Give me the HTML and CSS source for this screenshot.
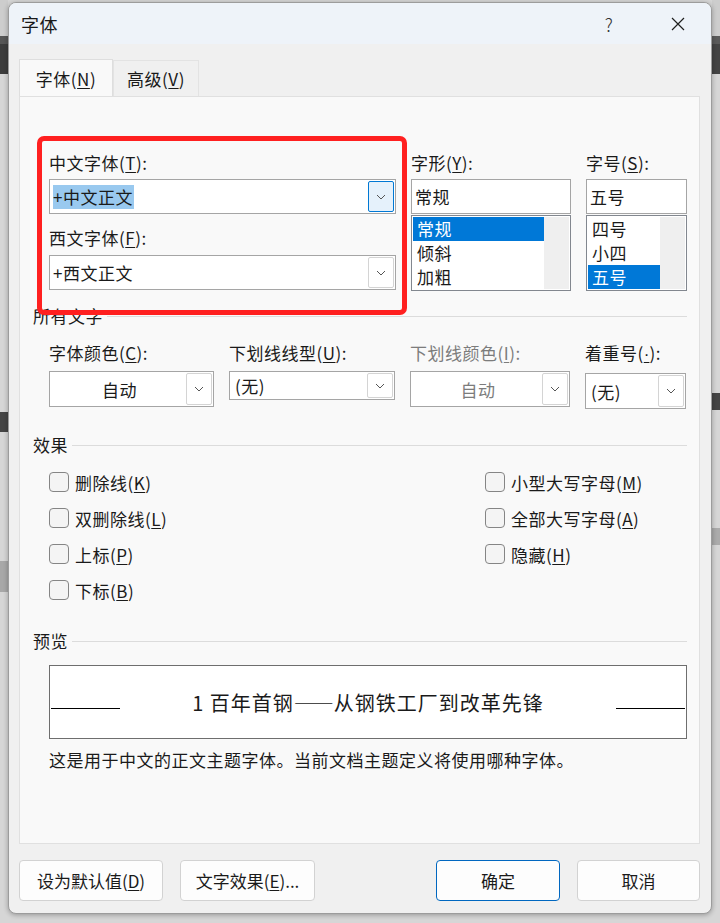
FILE: index.html
```html
<!DOCTYPE html>
<html lang="zh-CN">
<head>
  <meta charset="UTF-8">
  <title>字体</title>
  <link rel="stylesheet" href="styles.css">
</head>
<body>
  <div class="dialog">
    <div class="titlebar">
      <span class="title">字体</span>
      <span class="help">?</span>
      <span class="close">
        <svg width="14" height="14" viewBox="0 0 14 14"><path d="M1 1L13 13M13 1L1 13" stroke="#1f1f1f" stroke-width="1.2" fill="none"/></svg>
      </span>
    </div>

    <div class="tabs">
      <div class="tab active">字体(<u>N</u>)</div>
      <div class="tab">高级(<u>V</u>)</div>
    </div>

    <div class="panel">
      <div class="mark-box"></div>

      <div class="font-grid">
        <div class="col">
          <div class="lbl">中文字体(<u>T</u>):</div>
          <div class="combo big">
            <div class="value"><span class="picked">+中文正文</span></div>
            <div class="drop hot"><svg width="10" height="6" viewBox="0 0 10 6"><path d="M1 1L5 5L9 1" stroke="#555" fill="none"/></svg></div>
          </div>
          <div class="lbl second">西文字体(<u>F</u>):</div>
          <div class="combo big">
            <div class="value">+西文正文</div>
            <div class="drop"><svg width="10" height="6" viewBox="0 0 10 6"><path d="M1 1L5 5L9 1" stroke="#555" fill="none"/></svg></div>
          </div>
        </div>
        <div class="col">
          <div class="lbl">字形(<u>Y</u>):</div>
          <div class="textbox">常规</div>
          <div class="listbox">
            <ul>
              <li class="on">常规</li>
              <li>倾斜</li>
              <li>加粗</li>
            </ul>
            <div class="track"></div>
          </div>
        </div>
        <div class="col">
          <div class="lbl">字号(<u>S</u>):</div>
          <div class="textbox">五号</div>
          <div class="listbox">
            <ul class="sizes">
              <li>四号</li>
              <li>小四</li>
              <li class="on">五号</li>
            </ul>
            <div class="track"></div>
          </div>
        </div>
      </div>

      <div class="group first-group"><span>所有文字</span><i></i></div>

      <div class="color-grid">
        <div class="col">
          <div class="lbl">字体颜色(<u>C</u>):</div>
          <div class="combo">
            <div class="value center">自动</div>
            <div class="drop"><svg width="10" height="6" viewBox="0 0 10 6"><path d="M1 1L5 5L9 1" stroke="#555" fill="none"/></svg></div>
          </div>
        </div>
        <div class="col">
          <div class="lbl">下划线线型(<u>U</u>):</div>
          <div class="combo short">
            <div class="value pad">(无)</div>
            <div class="drop"><svg width="10" height="6" viewBox="0 0 10 6"><path d="M1 1L5 5L9 1" stroke="#555" fill="none"/></svg></div>
          </div>
        </div>
        <div class="col off">
          <div class="lbl">下划线颜色(<u>I</u>):</div>
          <div class="combo">
            <div class="value center">自动</div>
            <div class="drop"><svg width="10" height="6" viewBox="0 0 10 6"><path d="M1 1L5 5L9 1" stroke="#555" fill="none"/></svg></div>
          </div>
        </div>
        <div class="col">
          <div class="lbl">着重号(<u class="dot">·</u>):</div>
          <div class="combo">
            <div class="value pad">(无)</div>
            <div class="drop"><svg width="10" height="6" viewBox="0 0 10 6"><path d="M1 1L5 5L9 1" stroke="#555" fill="none"/></svg></div>
          </div>
        </div>
      </div>

      <div class="group effects-group"><span>效果</span><i></i></div>

      <div class="checks">
        <label class="check"><span class="box"></span>删除线(<u>K</u>)</label>
        <label class="check"><span class="box"></span>双删除线(<u>L</u>)</label>
        <label class="check"><span class="box"></span>上标(<u>P</u>)</label>
        <label class="check"><span class="box"></span>下标(<u>B</u>)</label>
        <label class="check"><span class="box"></span>小型大写字母(<u>M</u>)</label>
        <label class="check"><span class="box"></span>全部大写字母(<u>A</u>)</label>
        <label class="check"><span class="box"></span>隐藏(<u>H</u>)</label>
      </div>

      <div class="group preview-group"><span>预览</span><i></i></div>

      <div class="preview">
        <span class="rule"></span>
        <span class="sample">1 百年首钢<span class="dash">——</span>从钢铁工厂到改革先锋</span>
        <span class="rule"></span>
      </div>
      <div class="note">这是用于中文的正文主题字体。当前文档主题定义将使用哪种字体。</div>
    </div>

    <div class="footer">
      <button class="btn w-default">设为默认值(<u>D</u>)</button>
      <button class="btn w-effect">文字效果(<u>E</u>)...</button>
      <button class="btn ok">确定</button>
      <button class="btn cancel">取消</button>
    </div>
  </div>
</body>
</html>
```

FILE: styles.css
```css
body {
  margin: 0;
  height: 923px;
  overflow: hidden;
  font-family: "Noto Sans CJK SC", "Microsoft YaHei", sans-serif;
  font-size: 17px;
  letter-spacing: 0.5px;
  color: #1a1a1a;
  background:
    linear-gradient(to bottom, #cdcdcd 0 36px, #565656 36px 44px, #3c3c3c 44px 74px, #d6d6d6 74px 412px, #454545 412px 432px, #d6d6d6 432px 561px, #a8a8a8 561px 592px, #d6d6d6 592px) left top / 8px 100% no-repeat,
    linear-gradient(to bottom, #cdcdcd 0 36px, #5a5a5a 36px 44px, #444 44px 74px, #d6d6d6 74px 393px, #454545 393px 410px, #d6d6d6 410px 528px, #ababab 528px 545px, #d6d6d6 545px) right top / 8px 100% no-repeat,
    #d6d6d6;
}

u { text-decoration-thickness: 1px; text-underline-offset: 2px; }
u.dot { font-family: "Liberation Sans", sans-serif; letter-spacing: 0; }

.dialog {
  box-sizing: border-box;
  width: 704px;
  height: 912px;
  margin: 2px 0 0 8px;
  background: #f0f0f0;
  border: 1px solid #9c9c9c;
  border-radius: 8px;
  box-shadow: 0 1px 5px rgba(0,0,0,0.3);
  overflow: hidden;
}

.titlebar {
  height: 41px;
  background: #eef3f9;
  display: flex;
  align-items: center;
  padding-left: 12px;
}
.title { font-size: 18px; flex: 1; }
.help { font-size: 18px; color: #333; width: 20px; text-align: center; margin-right: 52px; font-weight: 300; }
.close { display: flex; margin-right: 26px; }

.tabs {
  display: flex;
  align-items: flex-end;
  margin: 14px 0 0 10px;
}
.tab {
  box-sizing: border-box;
  height: 36px;
  width: 86px;
  display: flex;
  align-items: center;
  justify-content: center;
  background: #f0f0f0;
  border: 1px solid #e3e3e3;
  border-bottom: none;
}
.tab.active {
  width: 94px;
  height: 38px;
  background: #f9f9f9;
  border-color: #dedede;
  position: relative;
  top: 1px;
}

.panel {
  position: relative;
  box-sizing: border-box;
  width: 681px;
  height: 748px;
  margin-left: 10px;
  background: #f9f9f9;
  border: 1px solid #e0e0e0;
  padding: 55px 12px 0 13px;
}

.mark-box {
  position: absolute;
  left: 17px;
  top: 39px;
  width: 370px;
  height: 179px;
  box-sizing: border-box;
  border: 5px solid #ff2020;
  border-radius: 7px;
  z-index: 2;
}

.lbl { line-height: 22px; margin-bottom: 5px; white-space: nowrap; }
.lbl.second { margin-top: 13px; margin-bottom: 6px; }

.font-grid {
  display: grid;
  grid-template-columns: 347px 160px 101px;
  column-gap: 15px;
  margin-left: 16px;
}

.combo {
  box-sizing: border-box;
  height: 36px;
  display: flex;
  padding: 1px;
  background: #fff;
  border: 1px solid #a5a5a5;
}
.combo.big { height: 35px; }
.combo.short { height: 29px; }
.combo .value {
  flex: 1;
  display: flex;
  align-items: center;
  padding-left: 2px;
  white-space: nowrap;
}
.combo .value.center { justify-content: center; }
.combo .value.pad { padding-left: 4px; }
.picked { background: #99c9ef; line-height: 24px; padding-right: 1px; }
.drop {
  box-sizing: border-box;
  width: 26px;
  display: flex;
  align-items: center;
  justify-content: center;
  border: 1px solid #d4d4d4;
  border-radius: 2px;
  background: #fff;
}
.drop.hot { background: #e5f1fb; border-color: #0078d4; }

.textbox {
  box-sizing: border-box;
  height: 35px;
  padding-left: 3px;
  display: flex;
  align-items: center;
  background: #fff;
  border: 1px solid #a5a5a5;
}
.listbox {
  box-sizing: border-box;
  height: 76px;
  margin-top: 1px;
  display: flex;
  padding: 1px;
  background: #fff;
  border: 1px solid #82878f;
}
.listbox ul { list-style: none; margin: 0; padding: 0; flex: 1; }
.listbox li { height: 24px; line-height: 24px; padding-left: 4px; }
.listbox li.on { background: #0078d7; color: #fff; }
.track { width: 25px; background: #efefef; }

.group {
  display: flex;
  align-items: center;
  line-height: 22px;
}
.group i { flex: 1; height: 1px; background: #dcdcdc; margin-left: 4px; }
.first-group { margin-top: 14px; }
.effects-group { margin-top: 25px; }
.preview-group { margin-top: 22px; }

.color-grid {
  display: grid;
  grid-template-columns: 165px 166px 160px 101px;
  column-gap: 15px;
  margin: 15px 0 0 16px;
  align-items: start;
}
.color-grid .lbl { margin-bottom: 7px; }
.off .lbl, .off .value { color: #7c7c7c; }

.checks {
  display: grid;
  grid-template-rows: repeat(4, 36px);
  grid-template-columns: 436px 1fr;
  grid-auto-flow: column;
  margin: 8px 0 0 16px;
}
.check { display: flex; align-items: center; }
.box {
  box-sizing: border-box;
  width: 20px;
  height: 20px;
  margin-right: 6px;
  border: 1px solid #858585;
  border-radius: 4px;
  background: #f4f4f4;
}

.preview {
  box-sizing: border-box;
  height: 74px;
  margin: 13px 0 0 16px;
  padding: 0 1px;
  display: flex;
  align-items: center;
  background: #fff;
  border: 1px solid #6e6e6e;
}
.rule { width: 69px; height: 1px; background: #000; margin-top: 12px; }
.sample {
  flex: 1;
  text-align: center;
  font-size: 20px;
  letter-spacing: 1px;
}
.sample .dash { letter-spacing: 0; }
.note { margin: 10px 0 0 16px; line-height: 22px; }

.footer {
  display: flex;
  margin: 16px 0 0 10px;
  width: 681px;
}
.btn {
  box-sizing: border-box;
  height: 41px;
  font: inherit;
  color: #1a1a1a;
  background: #fdfdfd;
  border: 1px solid #d2d2d2;
  border-radius: 4px;
  padding: 0;
}
.w-default { width: 144px; }
.w-effect { width: 135px; margin-left: 17px; }
.ok { width: 124px; margin-left: auto; border-color: #0067c0; }
.cancel { width: 123px; margin-left: 17px; }
```
